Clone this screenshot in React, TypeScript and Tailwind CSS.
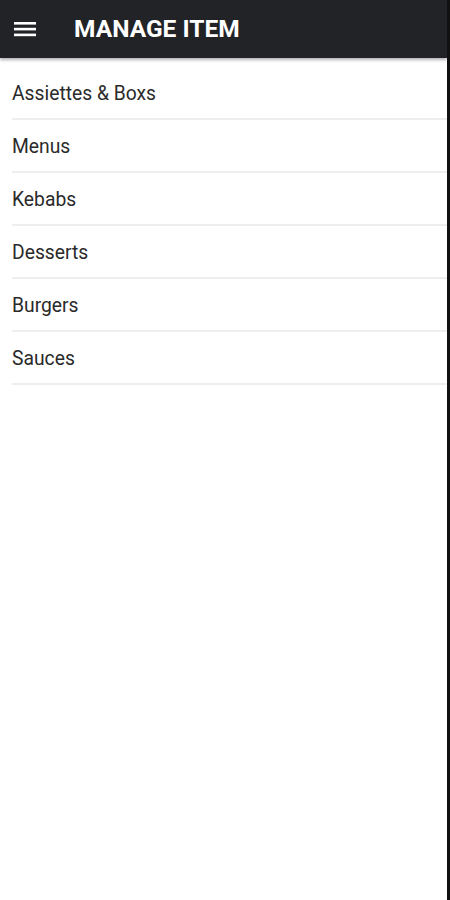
import React from "react";

const categories = ["Assiettes & Boxs", "Menus", "Kebabs", "Desserts", "Burgers", "Sauces"];

function MenuIcon() {
    return (
        <svg width="22" height="16" viewBox="0 0 22 16" fill="none">
            <rect x="0" y="1" width="22" height="2.6" fill="#ffffff" />
            <rect x="0" y="6.8" width="22" height="2.6" fill="#ffffff" />
            <rect x="0" y="12.6" width="22" height="2.6" fill="#ffffff" />
        </svg>
    );
}

function App() {
    return (
        <div className="flex h-[900px] w-[450px] bg-white" style={{ fontFamily: "Roboto, 'Noto Sans', sans-serif" }}>
            <div className="flex flex-1 flex-col">
                <header className="flex h-[58px] items-center bg-[#222326] shadow-[0_2px_3px_rgba(0,0,0,0.3)]">
                    <button className="ml-[14px] flex items-center">
                        <MenuIcon />
                    </button>
                    <h1 className="ml-[38px] text-[24.5px] font-bold text-white">MANAGE ITEM</h1>
                </header>
                <ul className="pt-[9px] pl-3">
                    {categories.map((name) => (
                        <li
                            key={name}
                            className="flex h-[53px] items-center border-b-2 border-[#eeeeee] pt-[3px] text-[19.3px] text-[#2a2a2a]"
                        >
                            {name}
                        </li>
                    ))}
                </ul>
            </div>
            <div className="w-[3px] bg-[#111111]" />
        </div>
    );
}

export default App;
